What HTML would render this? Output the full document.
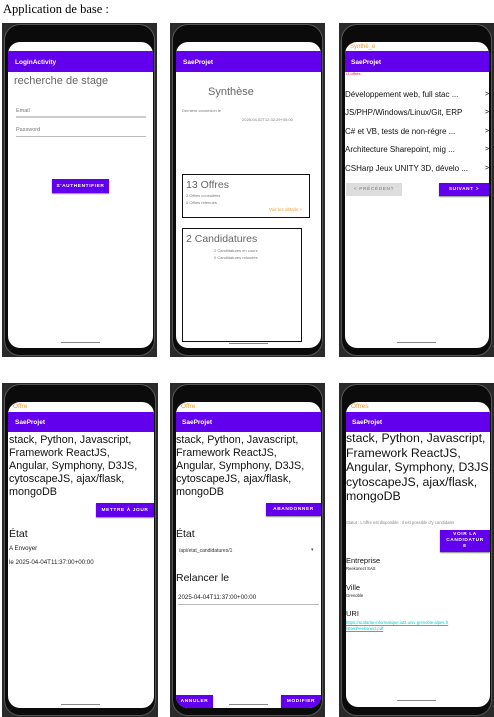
<!DOCTYPE html>
<html><head><meta charset="utf-8"><style>
*{margin:0;padding:0;box-sizing:border-box}
body{width:494px;height:717px;background:#fff;position:relative;overflow:hidden;font-family:"Liberation Sans",sans-serif}
.a{position:absolute;white-space:nowrap;line-height:1}
.ph{position:absolute;background:#2a2a2a}
.ph .b{position:absolute;left:2px;right:2px;top:1px;bottom:1px;background:#0b0b0b;border-radius:16px;border:1px solid #555}
.sc{position:absolute;background:#fff;border-radius:12px;overflow:hidden}
.bar{position:absolute;left:0;right:0;background:#6200ee;color:#fff;font-size:6.5px;font-weight:bold}
.btn{position:absolute;background:#6200ee;color:#fff;font-size:4.8px;font-weight:bold;letter-spacing:.6px;text-align:center;display:flex;align-items:center;justify-content:center;box-shadow:0 1px 1px #888}
.home{position:absolute;height:1px;background:#888;width:39px}
.big{font-size:10.8px;color:#111;line-height:13px}
</style></head><body>
<div class="a" style="left:3px;top:3px;font-family:'Liberation Serif',serif;font-size:12.5px">Application de base :</div>

<!-- Phone 1 -->
<div class="ph" style="left:2px;top:23px;width:155px;height:334px"><div class="b"></div></div>
<div class="sc" style="left:8px;top:42px;width:145px;height:306px">
 <div class="bar" style="top:9px;height:21px;padding:8px 0 0 7px">LoginActivity</div>
 <div class="a" style="left:6px;top:34px;font-size:11px;color:#666">recherche de stage</div>
 <div class="a" style="left:8px;top:67px;font-size:5.5px;color:#777">Email</div>
 <div class="a" style="left:8px;top:74px;width:130px;height:1.5px;background:#ccc"></div>
 <div class="a" style="left:8px;top:86px;font-size:5.5px;color:#777">Password</div>
 <div class="a" style="left:8px;top:94px;width:130px;height:1px;background:#bbb"></div>
 <div class="btn" style="left:44px;top:137px;width:57px;height:14px">S'AUTHENTIFIER</div>
 <div class="home" style="left:53px;top:300px"></div>
</div>

<!-- Phone 2 -->
<div class="ph" style="left:170px;top:23px;width:155px;height:334px"><div class="b"></div></div>
<div class="sc" style="left:176px;top:42px;width:145px;height:306px">
 <div class="bar" style="top:9px;height:21px;padding:8px 0 0 7px">SaeProjet</div>
 <div class="a" style="left:32px;top:45px;font-size:11px;color:#666">Synthèse</div>
 <div class="a" style="left:6px;top:67px;font-size:4px;color:#777">Dernière connexion le</div>
 <div class="a" style="left:66px;top:76px;font-size:4px;color:#777">2025-04-02T12:32:29+00:00</div>
 <div class="a" style="left:6px;top:132px;width:128px;height:44px;border:1px solid #111"></div>
 <div class="a" style="left:10px;top:138px;font-size:10.5px;color:#666">13 Offres</div>
 <div class="a" style="left:10px;top:152px;font-size:4px;color:#777">2 Offres consultées</div>
 <div class="a" style="left:10px;top:159px;font-size:4px;color:#777">0 Offres retenues</div>
 <div class="a" style="left:93px;top:166px;font-size:4.5px;color:#f39c33">Voir les détails &gt;</div>
 <div class="a" style="left:6px;top:186px;width:120px;height:114px;border:1px solid #111"></div>
 <div class="a" style="left:10px;top:192px;font-size:10.5px;color:#666">2 Candidatures</div>
 <div class="a" style="left:38px;top:207px;font-size:4px;color:#777">2 Candidatures en cours</div>
 <div class="a" style="left:38px;top:214px;font-size:4px;color:#777">0 Candidatures refusées</div>
 <div class="home" style="left:53px;top:301px"></div>
</div>

<!-- Phone 3 -->
<div class="ph" style="left:339px;top:23px;width:155px;height:334px"><div class="b"></div></div>
<div class="sc" style="left:345px;top:42px;width:144px;height:306px">
 <div class="a" style="left:5px;top:2px;font-size:6px;color:#f39c33">Synthè_e</div>
 <div class="bar" style="top:9px;height:21px;padding:8px 0 0 6px">SaeProjet</div>
 <div class="a" style="left:0;top:30px;font-size:4px;color:#f05">13 offres</div>
 <div class="a" style="left:0;top:49px;font-size:8px;color:#111">Développement web, full stac ...</div>
 <div class="a" style="left:0;top:67px;font-size:8px;color:#111">JS/PHP/Windows/Linux/Git, ERP</div>
 <div class="a" style="left:0;top:86px;font-size:8px;color:#111">C# et VB, tests de non-régre ...</div>
 <div class="a" style="left:0;top:104px;font-size:8px;color:#111">Architecture Sharepoint, mig ...</div>
 <div class="a" style="left:0;top:123px;font-size:8px;color:#111">CSHarp Jeux UNITY 3D, dévelo ...</div>
 <div class="a" style="left:140px;top:49px;font-size:7px">&gt;</div>
 <div class="a" style="left:140px;top:67px;font-size:7px">&gt;</div>
 <div class="a" style="left:140px;top:86px;font-size:7px">&gt;</div>
 <div class="a" style="left:140px;top:104px;font-size:7px">&gt;</div>
 <div class="a" style="left:140px;top:123px;font-size:7px">&gt;</div>
 <div class="btn" style="left:1px;top:141px;width:56px;height:13px;background:#ddd;color:#999;box-shadow:none">&lt; PRÉCÉDENT</div>
 <div class="btn" style="left:94px;top:141px;width:50px;height:13px">SUIVANT &gt;</div>
 <div class="home" style="left:52px;top:300px"></div>
</div>

<!-- Phone 4 -->
<div class="ph" style="left:2px;top:383px;width:156px;height:334px"><div class="b"></div></div>
<div class="sc" style="left:8px;top:402px;width:146px;height:306px">
 <div class="a" style="left:5px;top:2px;font-size:6.5px;color:#f39c33">Offre</div>
 <div class="bar" style="top:10px;height:20px;padding:7px 0 0 7px">SaeProjet</div>
 <div class="a big" style="left:1px;top:32px">stack, Python, Javascript,<br>Framework ReactJS,<br>Angular, Symphony, D3JS,<br>cytoscapeJS, ajax/flask,<br>mongoDB</div>
 <div class="btn" style="left:88px;top:101px;width:58px;height:14px">METTRE À JOUR</div>
 <div class="a" style="left:1px;top:127px;font-size:10.5px;color:#111">État</div>
 <div class="a" style="left:1px;top:144px;font-size:6.2px;color:#222">A Envoyer</div>
 <div class="a" style="left:1px;top:158px;font-size:6.2px;color:#222">le 2025-04-04T11:37:00+00:00</div>
 <div class="home" style="left:53px;top:302px"></div>
</div>

<!-- Phone 5 -->
<div class="ph" style="left:170px;top:383px;width:155px;height:334px"><div class="b"></div></div>
<div class="sc" style="left:176px;top:402px;width:145px;height:306px">
 <div class="a" style="left:5px;top:2px;font-size:6.5px;color:#f39c33">Offre</div>
 <div class="bar" style="top:10px;height:20px;padding:7px 0 0 6px">SaeProjet</div>
 <div class="a big" style="left:0;top:32px">stack, Python, Javascript,<br>Framework ReactJS,<br>Angular, Symphony, D3JS,<br>cytoscapeJS, ajax/flask,<br>mongoDB</div>
 <div class="btn" style="left:90px;top:101px;width:55px;height:13px">ABANDONNER</div>
 <div class="a" style="left:0;top:127px;font-size:10.5px;color:#111">État</div>
 <div class="a" style="left:3px;top:147px;font-size:5px;color:#333">/api/etat_candidatures/1</div>
 <div class="a" style="left:135px;top:146px;font-size:5px;color:#555">▾</div>
 <div class="a" style="left:0;top:171px;font-size:10.5px;color:#111">Relancer le</div>
 <div class="a" style="left:2px;top:193px;font-size:6.2px;color:#222">2025-04-04T11:37:00+00:00</div>
 <div class="a" style="left:2px;top:202px;width:141px;height:1px;background:#bbb"></div>
 <div class="btn" style="left:0;top:293px;width:37px;height:13px">ANNULER</div>
 <div class="btn" style="left:105px;top:293px;width:40px;height:13px">MODIFIER</div>
 <div class="home" style="left:53px;top:302px"></div>
</div>

<!-- Phone 6 -->
<div class="ph" style="left:339px;top:383px;width:155px;height:334px"><div class="b"></div></div>
<div class="sc" style="left:346px;top:402px;width:144px;height:305px">
 <div class="a" style="left:5px;top:2px;font-size:6.5px;color:#f39c33">Offres</div>
 <div class="bar" style="top:10px;height:20px;padding:7px 0 0 6px">SaeProjet</div>
 <div class="a" style="left:0;top:29px;font-size:12.3px;line-height:14.6px;color:#111">stack, Python, Javascript,<br>Framework ReactJS,<br>Angular, Symphony, D3JS,<br>cytoscapeJS, ajax/flask,<br>mongoDB</div>
 <div class="a" style="left:0;top:119px;font-size:4.2px;color:#888">Statut : L'offre est disponible : il est possible d'y candidater</div>
 <div class="btn" style="left:94px;top:128px;width:50px;height:22px;line-height:6px;white-space:normal">VOIR LA<br>CANDIDATUR<br>E</div>
 <div class="a" style="left:0;top:155px;font-size:7.5px;color:#111">Entreprise</div>
 <div class="a" style="left:0;top:165px;font-size:4.2px;color:#222">Reekonect SAS</div>
 <div class="a" style="left:0;top:182px;font-size:7.5px;color:#111">Ville</div>
 <div class="a" style="left:0;top:192px;font-size:4.2px;color:#222">Grenoble</div>
 <div class="a" style="left:0;top:208px;font-size:7.5px;color:#111">URI</div>
 <div class="a" style="left:0;top:218px;font-size:4.2px;line-height:6px;color:#0cc;text-decoration:underline">https://scolarite-informatique.iut2.univ-grenoble-alpes.fr<br>/stwid/reekonect.pdf</div>
 <div class="home" style="left:51px;top:298px"></div>
</div>
</body></html>
